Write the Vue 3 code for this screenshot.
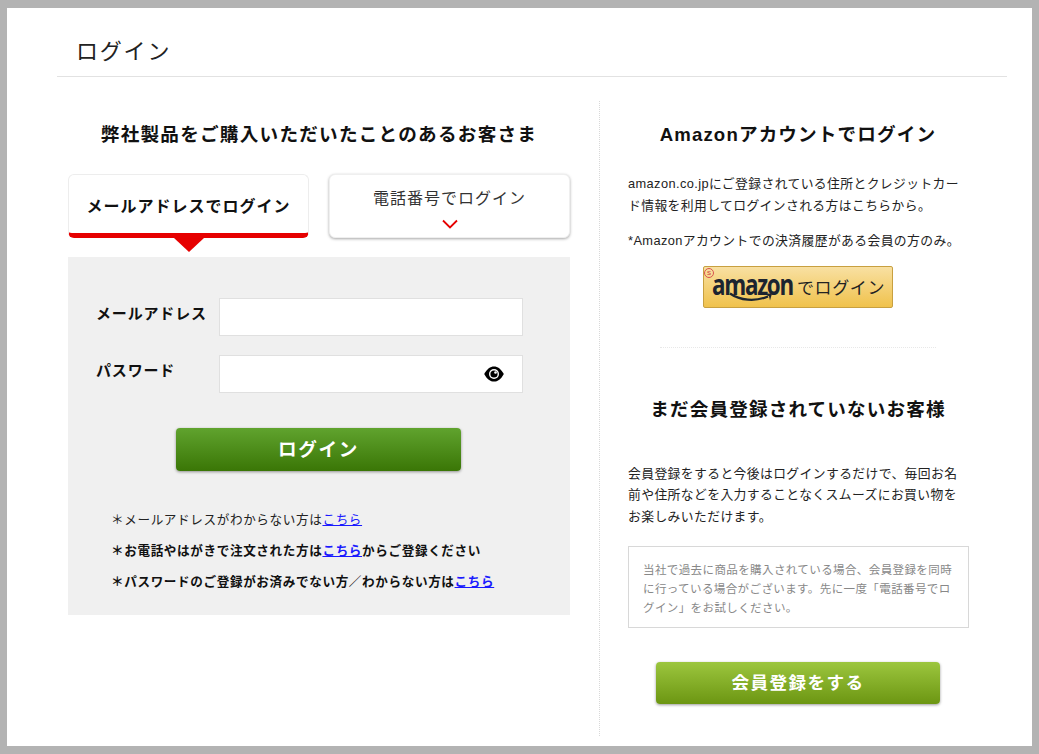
<template>
  <div class="page">
    <div class="title-bar">
      <h1 class="page-title">ログイン</h1>
    </div>
    <div class="columns">
      <section class="left">
        <h2 class="heading left-heading">弊社製品をご購入いただいたことのあるお客さま</h2>
        <div class="tabs">
          <div class="tab tab-active">メールアドレスでログイン</div>
          <div class="tab tab-other">
            <span>電話番号でログイン</span>
            <svg class="chevron" width="18" height="11" viewBox="0 0 18 11">
              <path d="M2 1.5 L9 8.5 L16 1.5" fill="none" stroke="#e60000" stroke-width="1.8" />
            </svg>
          </div>
        </div>
        <div class="panel">
          <div class="field">
            <label class="label">メールアドレス</label>
            <div class="input"></div>
          </div>
          <div class="field">
            <label class="label">パスワード</label>
            <div class="input input-pass">
              <svg class="eye" width="20" height="16" viewBox="0 0 20 16">
                <path d="M0.2 8 C3 2.8 6.3 0.4 10 0.4 C13.7 0.4 17 2.8 19.8 8 C17 13.2 13.7 15.6 10 15.6 C6.3 15.6 3 13.2 0.2 8 Z" fill="#000" />
                <circle cx="10" cy="8" r="5" fill="#fff" />
                <circle cx="10" cy="8" r="3.6" fill="#000" />
                <circle cx="11.5" cy="6.5" r="1.3" fill="#fff" />
              </svg>
            </div>
          </div>
          <button class="btn btn-login">ログイン</button>
          <ul class="notes">
            <li v-for="note in notes" :key="note.before" :class="{ strong: note.strong }">
              {{ note.before }}<a href="#" class="link">こちら</a>{{ note.after }}
            </li>
          </ul>
        </div>
      </section>

      <section class="right">
        <h2 class="heading">Amazonアカウントでログイン</h2>
        <p class="text amazon-text">amazon.co.jpにご登録されている住所とクレジットカード情報を利用してログインされる方はこちらから。</p>
        <p class="text amazon-only">*Amazonアカウントでの決済履歴がある会員の方のみ。</p>
        <div class="amazon-btn">
          <span class="badge">S</span>
          <span class="amazon-logo">
            <span class="amazon-word">amazon</span>
            <svg class="smile" width="46" height="11" viewBox="0 0 46 11">
              <path d="M1 1.5 C11 8.5 26 10 39 4.5" fill="none" stroke="#1c2430" stroke-width="2.2" />
              <path d="M35 1.8 L43 1.6 L41 8.5 L40 4.2 Z" fill="#1c2430" />
            </svg>
          </span>
          <span class="amazon-label">でログイン</span>
        </div>
        <div class="sep"></div>
        <h2 class="heading">まだ会員登録されていないお客様</h2>
        <p class="text register-text">会員登録をすると今後はログインするだけで、毎回お名前や住所などを入力することなくスムーズにお買い物をお楽しみいただけます。</p>
        <div class="hint">当社で過去に商品を購入されている場合、会員登録を同時に行っている場合がございます。先に一度「電話番号でログイン」をお試しください。</div>
        <button class="btn btn-register">会員登録をする</button>
      </section>
    </div>
  </div>
</template>

<script setup>
const notes = [
  { before: '＊メールアドレスがわからない方は', after: '', strong: false },
  { before: '＊お電話やはがきで注文された方は', after: 'からご登録ください', strong: true },
  { before: '＊パスワードのご登録がお済みでない方／わからない方は', after: '', strong: true }
]
</script>

<style>
html,
body {
  margin: 0;
  background: #fff;
}
</style>

<style scoped>
.page {
  box-sizing: border-box;
  width: 1039px;
  height: 754px;
  border-style: solid;
  border-color: #b3b3b3;
  border-width: 8px 7px;
  background: #fff;
  color: #111;
  font-family: "Liberation Sans", "Noto Sans CJK JP", sans-serif;
  overflow: hidden;
}
.title-bar {
  margin-left: 50px;
  width: 950px;
  height: 69px;
  box-sizing: border-box;
  border-bottom: 1px solid #e2e2e2;
  padding-left: 19px;
}
.page-title {
  margin: 0;
  padding-top: 29px;
  font-size: 22px;
  font-weight: 400;
  line-height: 30px;
  letter-spacing: 1.8px;
  color: #222;
}
.columns {
  display: flex;
  margin-top: 24px;
  margin-left: 61px;
}
.left {
  width: 502px;
  padding-top: 20px;
}
.heading {
  margin: 0;
  font-size: 18.6px;
  font-weight: 700;
  line-height: 28px;
  letter-spacing: 1.25px;
  text-align: center;
}
.left-heading {
  margin-bottom: 26px;
}
.tabs {
  display: flex;
  gap: 20px;
  margin-top: -1px;
}
.tab {
  box-sizing: border-box;
  width: 241px;
  height: 64px;
  border-radius: 6px;
  background: #fff;
  text-align: center;
}
.tab-active {
  position: relative;
  border: 1px solid #ededed;
  border-bottom: 5px solid #e60000;
  font-size: 16px;
  font-weight: 700;
  line-height: 63px;
  letter-spacing: 1px;
}
.tab-active::after {
  content: "";
  position: absolute;
  left: 50%;
  bottom: -19px;
  margin-left: -15px;
  border-style: solid;
  border-width: 14px 15px 0;
  border-color: #e60000 transparent transparent;
}
.tab-other {
  display: flex;
  flex-direction: column;
  align-items: center;
  padding-top: 13px;
  border: 1px solid #efefef;
  box-shadow: 0 1px 3px rgba(0, 0, 0, 0.35);
  font-size: 16px;
  line-height: 22px;
  letter-spacing: 1px;
  color: #333;
}
.chevron {
  flex: none;
  margin-top: 9px;
}
.panel {
  box-sizing: border-box;
  margin-top: 19px;
  height: 358px;
  padding: 41px 47px 0 28px;
  background: #f0f0f0;
}
.field {
  display: flex;
  margin-bottom: 19px;
}
.label {
  width: 123px;
  font-size: 15px;
  font-weight: 700;
  line-height: 31px;
  letter-spacing: 0.84px;
  white-space: nowrap;
}
.input {
  box-sizing: border-box;
  display: flex;
  align-items: center;
  justify-content: flex-end;
  width: 304px;
  height: 38px;
  border: 1px solid #e0e0e0;
  background: #fff;
}
.eye {
  margin-right: 18px;
}
.btn {
  display: block;
  border: 0;
  border-radius: 4px;
  color: #fff;
  font-family: inherit;
  font-weight: 700;
  box-shadow: 0 1px 3px rgba(0, 0, 0, 0.4);
}
.btn-login {
  width: 285px;
  height: 43px;
  margin: 35px 0 0 80px;
  padding-bottom: 6px;
  font-size: 18.6px;
  letter-spacing: 1.6px;
  background: linear-gradient(#60a32e, #3a7606);
}
.notes {
  list-style: none;
  margin: 34px 0 0 15px;
  padding: 0;
  font-size: 12.6px;
  letter-spacing: 0.62px;
  white-space: nowrap;
  color: #222;
}
.notes li {
  height: 31px;
  line-height: 31px;
}
.notes .strong {
  font-weight: 700;
  color: #111;
}
.link {
  color: #1a1aff;
  text-decoration: underline;
}
.right {
  width: 370px;
  margin-left: 29px;
  padding: 20px 0 12px 28px;
  border-left: 1px dotted #d8d8d8;
  box-sizing: border-box;
  height: 635px;
}
.right .heading {
  width: 340px;
  margin-left: 0;
  letter-spacing: 1.15px;
}
.text {
  margin: 0;
  width: 332px;
  font-size: 12.8px;
  line-height: 21.5px;
  letter-spacing: 0.4px;
  color: #222;
}
.amazon-text {
  margin-top: 24px;
}
.amazon-only {
  margin-top: 14px;
  white-space: nowrap;
}
.amazon-btn {
  position: relative;
  box-sizing: border-box;
  display: flex;
  align-items: flex-start;
  width: 190px;
  height: 42px;
  margin: 14px 0 0 75px;
  padding-left: 8px;
  border: 1px solid #c8a040;
  border-radius: 2px;
  background: linear-gradient(#f8e0a2, #f0c24c);
}
.badge {
  position: absolute;
  top: 1px;
  left: 0;
  width: 8px;
  height: 8px;
  border: 1px solid #d9534f;
  border-radius: 50%;
  font-size: 6px;
  line-height: 8px;
  text-align: center;
  color: #c23;
}
.amazon-logo {
  position: relative;
  width: 85px;
  height: 40px;
  flex: none;
}
.amazon-word {
  display: block;
  font-family: "Open Sans", sans-serif;
  font-size: 28px;
  font-weight: 700;
  line-height: 34px;
  letter-spacing: -1.6px;
  color: #1c2430;
  transform: scaleX(0.8);
  transform-origin: left;
  white-space: nowrap;
}
.smile {
  position: absolute;
  left: 17px;
  top: 25px;
}
.amazon-label {
  font-size: 17px;
  line-height: 44px;
  letter-spacing: 0.6px;
  color: #222;
}
.sep {
  width: 276px;
  margin: 39px 0 48px 32px;
  border-top: 1px dotted #e8e8e8;
}
.register-text {
  margin-top: 39px;
  width: 334px;
}
.hint {
  box-sizing: border-box;
  width: 341px;
  height: 82px;
  margin-top: 19px;
  padding: 14px 14px 0;
  border: 1px solid #d8d8d8;
  font-size: 11.5px;
  line-height: 19.2px;
  letter-spacing: 0.4px;
  color: #888;
}
.btn-register {
  width: 284px;
  height: 42px;
  margin: 34px 0 0 28px;
  padding-bottom: 4px;
  font-size: 17.6px;
  letter-spacing: 1.4px;
  background: linear-gradient(#9cc63e, #6c9612);
}
</style>
